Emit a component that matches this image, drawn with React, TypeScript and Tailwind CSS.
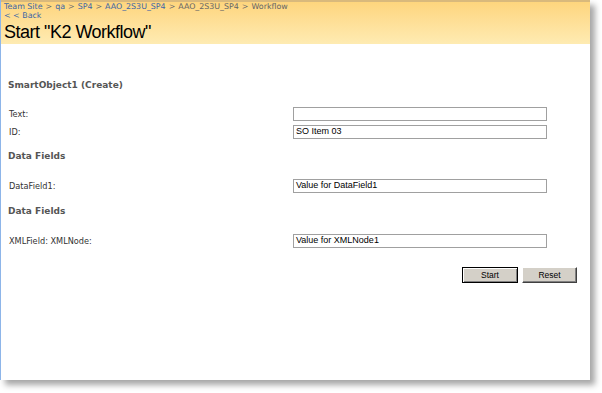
import React from 'react';

const crumbs: { text: string; link: boolean }[] = [
  { text: 'Team Site', link: true },
  { text: 'qa', link: true },
  { text: 'SP4', link: true },
  { text: 'AAO_2S3U_SP4', link: true },
  { text: 'AAO_2S3U_SP4', link: false },
  { text: 'Workflow', link: false },
];

function Field({ label, value, className }: { label: string; value: string; className: string }) {
  return (
    <div className={`flex h-[14px] items-center ${className}`}>
      <div className="w-[292px] pl-[8px] text-[8.2px] text-[#333]">{label}</div>
      <div className="flex h-[14px] w-[254px] items-center border border-[#a0a0a0] bg-white px-[2px] font-['Liberation_Sans',Arial,sans-serif] text-[9px] text-black">
        {value}
      </div>
    </div>
  );
}

function Heading({ children, className }: { children: React.ReactNode; className: string }) {
  return (
    <div className={`flex h-[14px] items-center pl-[7px] text-[9px] font-bold text-[#555] ${className}`}>{children}</div>
  );
}

export default function App() {
  return (
    <div className="h-[393px] w-[602px] overflow-hidden bg-white font-['DejaVu_Sans',Verdana,sans-serif]">
      <div className="h-[380px] w-[590px] border-l border-[#8db5e9] bg-white shadow-[5px_5px_6px_rgba(0,0,0,0.35)]">
        <header className="h-[44px] border-t-2 border-[#d9b97c] bg-gradient-to-b from-[#fed57d] to-[#feebb2] pl-[3px]">
          <div className="flex h-[9px] items-center text-[7.9px] leading-none">
            {crumbs.map((c, i) => (
              <span key={i} className="flex items-center">
                {i > 0 && <span className="px-[3px] text-[#6a6a6a]">&gt;</span>}
                <span className={c.link ? 'text-[#3b65a6]' : 'text-[#666]'}>{c.text}</span>
              </span>
            ))}
          </div>
          <div className="flex h-[10px] items-center text-[7.9px] leading-none text-[#3b65a6]">&lt; &lt; Back</div>
          <h1 className="mt-[1px] font-['Liberation_Sans',Arial,sans-serif] text-[18px] leading-[20px] tracking-[-0.5px] text-black">
            Start "K2 Workflow"
          </h1>
        </header>

        <Heading className="mt-[35px]">SmartObject1 (Create)</Heading>
        <Field className="mt-[14px]" label="Text:" value="" />
        <Field className="mt-[4px]" label="ID:" value="SO Item 03" />
        <Heading className="mt-[11px]">Data Fields</Heading>
        <Field className="mt-[15px]" label="DataField1:" value="Value for DataField1" />
        <Heading className="mt-[12px]">Data Fields</Heading>
        <Field className="mt-[15px]" label="XMLField: XMLNode:" value="Value for XMLNode1" />

        <div className="mt-[19px] flex gap-[4px] pl-[461px] font-['Liberation_Sans',Arial,sans-serif] text-[8.5px] text-black">
          <button className="h-[16px] w-[56px] border border-black bg-[#d4d0c8] shadow-[inset_1px_1px_0_#fff,inset_-1px_-1px_0_#808080]">
            Start
          </button>
          <button className="h-[16px] w-[55px] border border-t-white border-l-white border-r-[#404040] border-b-[#404040] bg-[#d4d0c8] shadow-[inset_-1px_-1px_0_#808080]">
            Reset
          </button>
        </div>
      </div>
    </div>
  );
}
